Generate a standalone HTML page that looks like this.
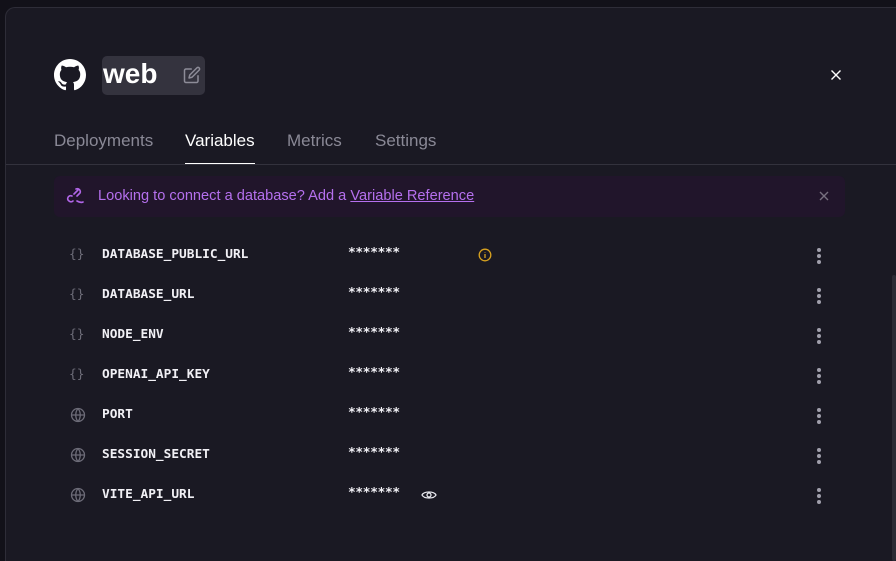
<!DOCTYPE html>
<html><head><meta charset="utf-8"><style>
*{margin:0;padding:0;box-sizing:border-box}
html,body{width:896px;height:561px;background:#121119;overflow:hidden;font-family:"Liberation Sans",sans-serif;position:relative}
.panel{position:absolute;left:5px;top:7px;width:891px;height:554px;background:#1a1923;border:1px solid #2e2d38;border-right:none;border-bottom:none;border-radius:10px 0 0 0}
.abs{position:absolute}
.tab{position:absolute;top:131px;font-size:17px;color:#8a8996}
.row{position:absolute;left:0;width:896px;height:40px}
.row .ic{position:absolute;left:69px;top:0;color:#6d6c78;font-family:"DejaVu Sans Mono",monospace;font-size:12.8px}
.row .nm{position:absolute;left:102px;top:0;color:#f1f0f5;font-family:"DejaVu Sans Mono",monospace;font-size:12.8px;font-weight:600}
.row .st{position:absolute;left:348px;top:-2px;color:#f1f0f5;font-family:"DejaVu Sans Mono",monospace;font-size:12.8px;font-weight:bold;letter-spacing:-0.3px}
.dots{position:absolute;left:817px;top:1px;width:4px}
.dots i{display:block;width:4px;height:4px;border-radius:2px;background:#a09fab;margin-bottom:2px}
</style></head><body>
<div class="panel"></div>
<svg class="abs" style="left:54px;top:59px" width="32" height="32" viewBox="0 0 16 16"><path fill="#fff" d="M8 0C3.58 0 0 3.58 0 8c0 3.540 2.29 6.53 5.47 7.59.4.07.55-.17.55-.38 0-.19-.01-.82-.01-1.49-2.010.37-2.53-.49-2.690-.94-.09-.23-.48-.94-.82-1.13-.28-.15-.68-.52-.01-.53.63-.01 1.08.58 1.23.82.72 1.21 1.87.87 2.33.66.07-.52.28-.87.51-1.07-1.78-.2-3.64-.89-3.64-3.95 0-.87.31-1.59.82-2.15-.08-.2-.36-1.02.08-2.12 0 0 .67-.21 2.2.82.64-.18 1.32-.27 2-.27.68 0 1.36.09 2 .27 1.53-1.04 2.2-.82 2.2-.82.44 1.1.16 1.92.08 2.12.51.56.82 1.27.82 2.15 0 3.07-1.87 3.75-3.65 3.95.29.25.54.73.54 1.48 0 1.07-.01 1.93-.01 2.2 0 .21.15.46.55.38A8.013 8.013 0 0016 8c0-4.42-3.58-8-8-8z"/></svg>
<div class="abs" style="left:102px;top:56px;width:103px;height:39px;background:#34333e;border-radius:5px"></div>
<div class="abs" style="left:103px;top:58px;font-size:28px;font-weight:bold;color:#fff">web</div>
<svg class="abs" style="left:183px;top:66px" width="18" height="18" viewBox="0 0 24 24" fill="none" stroke="#8d8c98" stroke-width="2" stroke-linecap="round" stroke-linejoin="round"><path d="M11 4H4a2 2 0 0 0-2 2v14a2 2 0 0 0 2 2h14a2 2 0 0 0 2-2v-7"/><path d="M18.5 2.5a2.1 2.1 0 0 1 3 3L12 15l-4 1 1-4z"/></svg>
<svg class="abs" style="left:830px;top:69px" width="12" height="12" viewBox="0 0 12 12" stroke="#fff" stroke-width="1.4"><path d="M1.5 1.5l9 9M10.5 1.5l-9 9"/></svg>
<div class="tab" style="left:54px">Deployments</div>
<div class="tab" style="left:185px;color:#fff">Variables</div>
<div class="tab" style="left:287px">Metrics</div>
<div class="tab" style="left:375px">Settings</div>
<div class="abs" style="left:185px;top:163px;width:70px;height:2px;background:#fff"></div>
<div class="abs" style="left:6px;top:164px;width:890px;height:1px;background:#33323d"></div>
<div class="abs" style="left:54px;top:176px;width:791px;height:41px;background:#21152b;border-radius:6px"></div>
<svg class="abs" style="left:66px;top:186px" width="18" height="20" viewBox="0 0 18 20" fill="none" stroke="#b166e8" stroke-width="1.6" stroke-linecap="round"><path d="M10 3a3 3 0 0 1 4 4l-3 3M8 8l4-4M6 10a3 3 0 0 0-4 4l1 1a3 3 0 0 0 4 0M11 15c2 1 4 2 6 1"/></svg>
<div class="abs" style="left:98px;top:188px;font-size:14.6px;color:#b570ee">Looking to connect a database? Add a <span style="text-decoration:underline">Variable Reference</span></div>
<svg class="abs" style="left:819px;top:191px" width="10" height="10" viewBox="0 0 10 10" stroke="#77707f" stroke-width="1.4"><path d="M1 1l8 8M9 1l-8 8"/></svg>

<div class="row" style="top:247px"><span class="ic">{}</span><span class="nm">DATABASE_PUBLIC_URL</span><span class="st">*******</span>
<svg class="abs" style="left:478px;top:1px" width="14" height="14" viewBox="0 0 14 14" fill="none" stroke="#d7a11f" stroke-width="1.3"><circle cx="7" cy="7" r="5.8"/><path d="M7 6v4M7 4v.5"/></svg><div class="dots"><i></i><i></i><i></i></div></div>
<div class="row" style="top:287px"><span class="ic">{}</span><span class="nm">DATABASE_URL</span><span class="st">*******</span><div class="dots"><i></i><i></i><i></i></div></div>
<div class="row" style="top:327px"><span class="ic">{}</span><span class="nm">NODE_ENV</span><span class="st">*******</span><div class="dots"><i></i><i></i><i></i></div></div>
<div class="row" style="top:367px"><span class="ic">{}</span><span class="nm">OPENAI_API_KEY</span><span class="st">*******</span><div class="dots"><i></i><i></i><i></i></div></div>
<div class="row" style="top:407px"><svg class="abs" style="left:70px;top:0px" width="16" height="16" viewBox="0 0 16 16" fill="none" stroke="#6d6c78" stroke-width="1.3"><circle cx="8" cy="8" r="6.5"/><path d="M1.5 8h13M8 1.5c-3 3.5-3 9.5 0 13M8 1.5c3 3.5 3 9.5 0 13"/></svg><span class="nm">PORT</span><span class="st">*******</span><div class="dots"><i></i><i></i><i></i></div></div>
<div class="row" style="top:447px"><svg class="abs" style="left:70px;top:0px" width="16" height="16" viewBox="0 0 16 16" fill="none" stroke="#6d6c78" stroke-width="1.3"><circle cx="8" cy="8" r="6.5"/><path d="M1.5 8h13M8 1.5c-3 3.5-3 9.5 0 13M8 1.5c3 3.5 3 9.5 0 13"/></svg><span class="nm">SESSION_SECRET</span><span class="st">*******</span><div class="dots"><i></i><i></i><i></i></div></div>
<div class="row" style="top:487px"><svg class="abs" style="left:70px;top:0px" width="16" height="16" viewBox="0 0 16 16" fill="none" stroke="#6d6c78" stroke-width="1.3"><circle cx="8" cy="8" r="6.5"/><path d="M1.5 8h13M8 1.5c-3 3.5-3 9.5 0 13M8 1.5c3 3.5 3 9.5 0 13"/></svg><span class="nm">VITE_API_URL</span><span class="st">*******</span>
<svg class="abs" style="left:421px;top:1px" width="16" height="14" viewBox="0 0 16 14" fill="none" stroke="#e8e8ee" stroke-width="1.3"><path d="M1 7c2-4 12-4 14 0c-2 4-12 4-14 0z"/><circle cx="8" cy="7" r="2"/></svg><div class="dots"><i></i><i></i><i></i></div></div>
<div class="abs" style="left:892px;top:275px;width:4px;height:286px;background:#2c2b35;border-radius:2px"></div>
</body></html>
